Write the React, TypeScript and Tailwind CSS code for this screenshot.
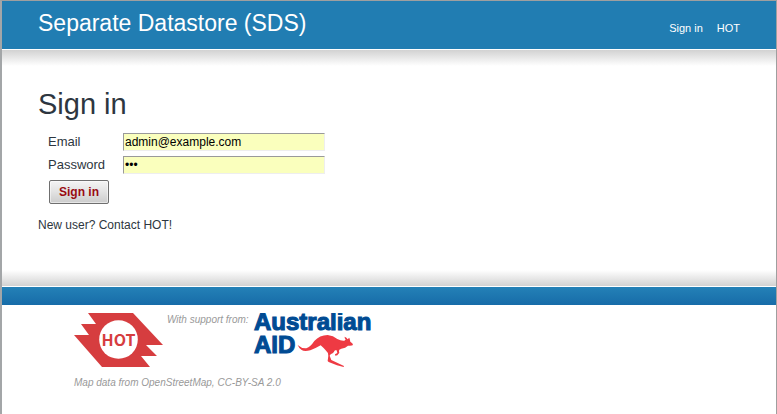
function HotLogo() {
  return (
    <svg className="h-[54px] w-[89px] shrink-0 not-italic" viewBox="0 0 89 54" role="img" aria-label="HOT">
      <polygon
        fill="#d63d3f"
        points="14,0 59,0 89,32 72,32 83,43 67,43 76,54 28,54 0,22 15,22 7,11 22,11"
      />
      <circle cx="44.5" cy="26.5" r="19.3" fill="#fff" />
      <text
        x="44.5"
        y="33"
        textAnchor="middle"
        className="fill-[#d63d3f] font-['Noto_Sans_CJK_SC','Liberation_Sans',sans-serif] text-[16px] font-bold"
      >
        HOT
      </text>
    </svg>
  );
}

function AusAidLogo() {
  return (
    <svg className="h-[56px] w-[122px] shrink-0 not-italic" viewBox="0 0 122 56" role="img" aria-label="Australian AID">
      <g
        stroke="#004b93"
        strokeWidth="1.1"
        className="fill-[#004b93] font-['Liberation_Sans',Arial,sans-serif] text-[24px] font-bold"
      >
        <text x="1" y="17">Australian</text>
        <text x="1" y="40">AID</text>
      </g>
      <path
        fill="#ee3a43"
        transform="translate(-94 -8) scale(0.3333)"
        d="M416 120 Q428 131 442 130 Q455 125 466 108 Q482 90 506 90 Q523 92 535 102 Q546 108 556 107 L560 104 Q556 98 557 95 Q563 97 566 103 Q570 99 571 98 Q573 104 574 110 Q583 116 582 120 Q579 123 567 122 Q560 129 547 131 L541 134 Q539 139 541 143 L535 151 L529 152 L528 148 L535 144 L533 136 L528 136 Q524 145 515 148 L512 152 L517 165 L555 183 L554 186 L534 181 L509 171 L506 168 L508 153 Q508 142 500 136 Q493 128 485 121 Q470 130 454 136 Q436 141 428 135 Q420 130 416 120 Z"
      />
    </svg>
  );
}

const inputClass =
  "block h-[18px] w-[202px] border border-t-[#9a9a9a] border-l-[#9a9a9a] border-r-[#eeeeee] border-b-[#eeeeee] bg-[#faffbd] px-px text-[12px] leading-4 text-black outline-none";

export default function App() {
  return (
    <div className="min-h-screen border-t border-r border-l-2 border-t-[#9f9f9f] border-r-[#9f9f9f] border-l-[#a3a6a8] bg-white font-['Liberation_Sans',Arial,sans-serif] text-[12px] leading-4 text-[#2d3640]">
      <header className="flex h-12 items-start justify-between bg-[#217db2] pr-9 pl-9 text-white">
        <div className="pt-2 text-[23px] leading-7">Separate Datastore (SDS)</div>
        <nav className="flex gap-[14px] pt-[19px] text-[11px] leading-4">
          <a href="#signin">Sign in</a>
          <a href="#hot">HOT</a>
        </nav>
      </header>

      <main className="mt-px bg-[linear-gradient(to_bottom,#d2d2d2,#ffffff_16px,#ffffff_calc(100%-16px),#d2d2d2)] px-9 pt-9 pb-[53px]">
        <h1 className="text-[29px] leading-9">Sign in</h1>
        <form className="pt-[11px] pl-[10px]" onSubmit={(e) => e.preventDefault()}>
          <div className="flex items-center">
            <label htmlFor="email" className="w-[75px] text-[13px] leading-4">Email</label>
            <input id="email" type="email" defaultValue="admin@example.com" className={inputClass} />
          </div>
          <div className="mt-[5px] flex items-center">
            <label htmlFor="password" className="w-[75px] text-[13px] leading-4">Password</label>
            <input id="password" type="password" defaultValue="abc" className={inputClass} />
          </div>
          <button
            type="submit"
            className="mt-[6px] ml-px h-6 w-[60px] rounded-[2px] border border-[#6f6f6f] bg-linear-to-b from-[#f4f4f4] via-[#e2e2e2] to-[#cccccc] text-[12px] leading-4 font-bold text-[#990b12] shadow-[inset_0_0_0_1px_#ffffff80]"
          >
            Sign in
          </button>
        </form>
        <p className="mt-[13px]">New user? Contact HOT!</p>
      </main>

      <footer>
        <div className="mt-px h-[18px] bg-linear-to-b from-[#2481b7] to-[#176ca8]" />
        <div className="px-[72px] pt-2 text-[10px] leading-3 text-[#999999] italic">
          <div className="flex items-start">
            <HotLogo />
            <span className="mt-px ml-1">With support from:</span>
            <div className="ml-1">
              <AusAidLogo />
            </div>
          </div>
          <p className="mt-2">Map data from OpenStreetMap, CC-BY-SA 2.0</p>
        </div>
      </footer>
    </div>
  );
}
